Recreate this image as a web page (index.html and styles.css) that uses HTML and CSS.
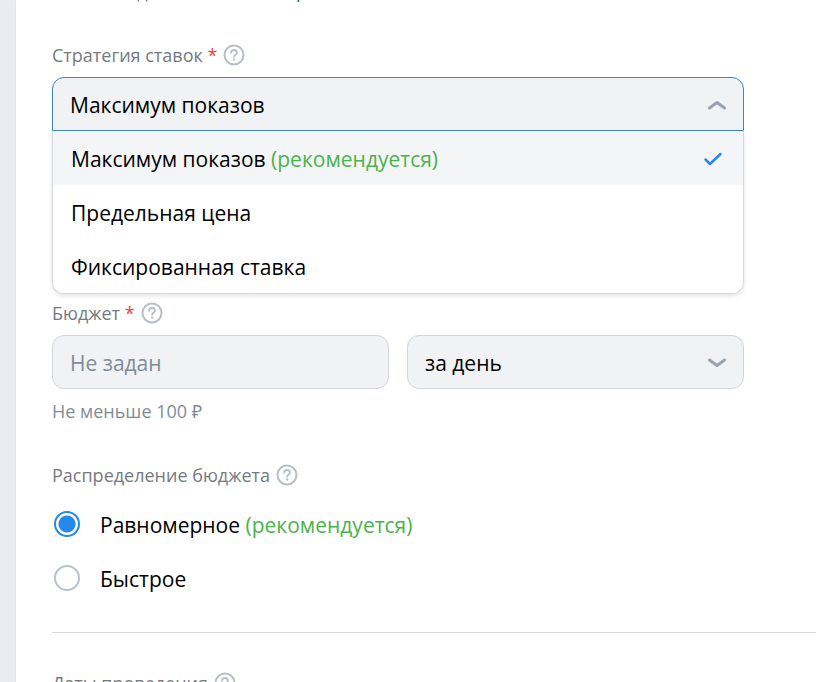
FILE: index.html
```html
<!DOCTYPE html>
<html lang="ru">
<head>
<meta charset="utf-8">
<meta name="viewport" content="width=device-width, initial-scale=1">
<title>Бюджет</title>
<link rel="stylesheet" href="styles.css">
</head>
<body>
<svg class="sprite" aria-hidden="true">
  <symbol id="help" viewBox="0 0 22 22"><circle cx="11" cy="11" r="9.5" fill="none" stroke="currentColor" stroke-width="2"/><path d="M8 8.8C8.1 6.9 9.3 6 11 6s3 1 3 2.600c0 2-2.900 2.300-2.900 4.200" fill="none" stroke="currentColor" stroke-width="1.800" stroke-linecap="round"/><circle cx="11.100" cy="15.600" r="1.200" fill="currentColor"/></symbol>
  <symbol id="chevron" viewBox="0 0 20 12"><path d="M2.500 3 10 8.500l7.500-5.500" fill="none" stroke="currentColor" stroke-width="3" stroke-linecap="round" stroke-linejoin="round"/></symbol>
  <symbol id="check" viewBox="0 0 20 16"><path d="M2.500 8.500 7 13 17.500 3" fill="none" stroke="currentColor" stroke-width="2.500" stroke-linecap="round" stroke-linejoin="round"/></symbol>
</svg>
<main class="panel">
  <p class="intro"><span>Оставьте дневной лимит <a href="#">сервиса</a></span></p>

  <section class="field">
    <div class="label"><label for="strategy">Стратегия ставок <span class="required">*</span></label><svg class="help"><use href="#help"/></svg></div>
    <div class="dropdown">
      <button id="strategy" class="control control-open" type="button" aria-expanded="true" aria-haspopup="listbox">Максимум показов<svg class="chevron chevron-up"><use href="#chevron"/></svg></button>
      <div class="menu" role="listbox">
        <button class="option option-selected" type="button" role="option" aria-selected="true"><span>Максимум показов <span class="hint">(рекомендуется)</span></span><svg class="check"><use href="#check"/></svg></button>
        <button class="option" type="button" role="option" aria-selected="false">Предельная цена</button>
        <button class="option" type="button" role="option" aria-selected="false">Фиксированная ставка</button>
      </div>
    </div>
  </section>

  <section class="field">
    <div class="label"><label for="budget">Бюджет <span class="required">*</span></label><svg class="help"><use href="#help"/></svg></div>
    <div class="row">
      <input id="budget" class="control" type="text" placeholder="Не задан">
      <div class="select">
        <select class="control" aria-label="Период"><option>за день</option></select>
        <svg class="chevron select-arrow"><use href="#chevron"/></svg>
      </div>
    </div>
    <p class="note">Не меньше 100 ₽</p>
  </section>

  <fieldset class="distribution">
    <legend class="label">Распределение бюджета<svg class="help"><use href="#help"/></svg></legend>
    <label class="choice"><input type="radio" name="mode" checked><span class="choice-text">Равномерное <span class="hint">(рекомендуется)</span></span></label>
    <label class="choice"><input type="radio" name="mode"><span class="choice-text">Быстрое</span></label>
  </fieldset>

  <section class="dates">
    <div class="label">Даты проведения<svg class="help"><use href="#help"/></svg></div>
  </section>
</main>
</body>
</html>
```
FILE: styles.css
```css
* { box-sizing: border-box; }
html { background: #ebecf1; overflow-x: hidden; scrollbar-width: none; }
body { margin: 0; font-family: "Open Sans", "Noto Sans", sans-serif; font-size: 21px; line-height: 30px; color: #000; }
button, input, select { font: inherit; color: inherit; }
.sprite { display: none; }
.panel { margin-left: 16px; min-height: 100vh; padding-left: 36px; background: #fff; box-shadow: 0 0 2px #d3d5da; }
.intro { margin: 0 0 36px; height: 6px; display: flex; align-items: flex-end; font-size: 18px; color: #76797f; }
.intro a { color: #2a5885; text-decoration: none; }
.field, .distribution { width: 692px; max-width: calc(100% - 16px); }
.label { display: flex; align-items: center; gap: 6px; height: 26px; padding: 0; font-size: 18px; line-height: 26px; color: #76797f; }
.required { color: #e64646; }
.help { width: 22px; height: 22px; color: #b8bec7; }
.dropdown { margin: 9px 0 6px; }
.control { display: block; width: 100%; height: 54px; padding: 2px 17px 0; border: 1px solid #d3d5d8; border-radius: 12px; background: #f0f2f4; text-align: left; appearance: none; }
.control::placeholder { color: #818c99; opacity: 1; }
.control-open { display: flex; align-items: center; justify-content: space-between; padding-right: 16px; border-color: #3f86c9; border-radius: 12px 12px 0 0; }
.chevron { width: 20px; height: 12px; color: #99a2ad; }
.chevron-up { transform: rotate(180deg); }
.menu { overflow: hidden; border: 1px solid #d7d8d9; border-top: 0; border-radius: 0 0 12px 12px; background: #fff; box-shadow: 0 2px 4px #0000001c; }
.option { display: flex; align-items: center; justify-content: space-between; width: 100%; height: 54px; padding: 2px 20px 0 18px; border: 0; background: #fff; text-align: left; }
.option-selected { background: #f4f5f7; }
.hint { color: #4bb34b; }
.check { width: 20px; height: 16px; color: #2688eb; }
.row { display: grid; grid-template-columns: 1fr 1fr; gap: 18px; margin-top: 9px; }
.select { position: relative; }
.select-arrow { position: absolute; right: 17px; top: 22px; pointer-events: none; }
.note { margin: 9px 0 0; font-size: 18px; line-height: 26px; color: #818c99; }
.distribution { margin: 38px 0 0; padding: 0; border: 0; }
.distribution .label { margin-bottom: 9px; }
.choice { display: flex; align-items: center; gap: 20px; height: 54px; padding-left: 2px; }
.choice-text { padding-top: 2px; }
.choice input { appearance: none; width: 26px; height: 26px; margin: 0; border: 2px solid #b8c1cc; border-radius: 50%; }
.choice input:checked { border-color: #2688eb; background: radial-gradient(circle, #2688eb 8px, #fff 9px); }
.dates { margin-top: 27px; padding-top: 37px; border-top: 1px solid #d7d8d9; }
```
